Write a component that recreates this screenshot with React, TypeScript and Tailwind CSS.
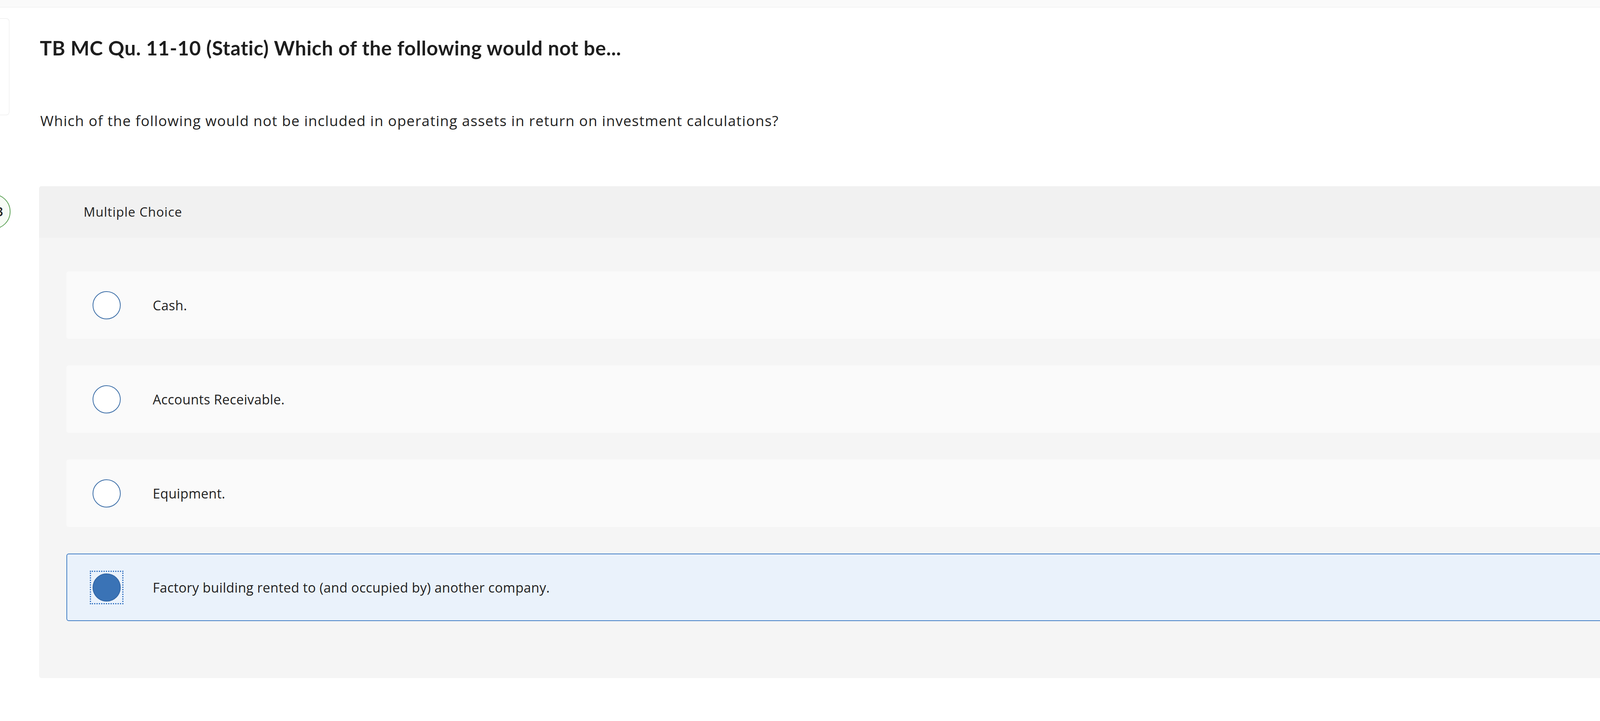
import React from "react";

const options = [
  { label: "Cash.", selected: false },
  { label: "Accounts Receivable.", selected: false },
  { label: "Equipment.", selected: false },
  { label: "Factory building rented to (and occupied by) another company.", selected: true },
];

function Radio({ selected }: { selected: boolean }) {
  if (selected) {
    return (
      <div className="-mx-[7px] w-[86px] h-[86px] shrink-0 border-[3px] border-dotted border-[#2f6fc0] flex items-center justify-center">
        <div className="w-[72px] h-[72px] rounded-full bg-[#3a73b6] border-2 border-[#3266a6]" />
      </div>
    );
  }
  return <div className="w-[72px] h-[72px] shrink-0 rounded-full bg-white border-2 border-[#3d6fa8]" />;
}

export default function App() {
  return (
    <div className="w-[6045px] h-[1847px] bg-white overflow-hidden font-['Open_Sans',sans-serif] text-[#222]">
      <div className="h-[19px] bg-[#fafafa] border-b border-[#ececec]" />
      <div className="flex">
        <div className="w-[100px] shrink-0 flex flex-col">
          <div className="mt-[28px] w-[24px] h-[248px] border border-l-0 border-[#e8e8e8] rounded-r-[8px] bg-white" />
          <div className="mt-[202px] -ml-[63px] w-[90px] h-[90px] rounded-full border-2 border-[#62a55c] bg-[#f7fbf5] flex items-center justify-end pr-[17px] text-[32px] font-semibold text-[#222]">
            3
          </div>
        </div>
        <div className="w-[5700px] shrink-0">
          <h1 className="mt-[74px] pl-[2px] font-['Lato',sans-serif] text-[51px] leading-[60px] tracking-[0.7px] font-bold text-[#1e1e1e]">
            TB MC Qu. 11-10 (Static) Which of the following would not be...
          </h1>
          <p className="mt-[132px] pl-[3px] text-[37px] leading-[48px] tracking-[1.3px] text-[#222]">
            Which of the following would not be included in operating assets in return on investment calculations?
          </p>
          <div className="mt-[144px] rounded-[6px] bg-[#f5f5f5] overflow-hidden">
            <div className="h-[132px] bg-[#f1f1f1] flex items-center pl-[114px] text-[33px] leading-[44px] tracking-[1px] text-[#222]">
              Multiple Choice
            </div>
            <div className="pt-[86px] pb-[146px] pl-[70px] pr-[75px] flex flex-col gap-[68px]">
              {options.map((o) => (
                <div
                  key={o.label}
                  className={
                    o.selected
                      ? "h-[173px] rounded-[6px] border-2 border-[#4580c6] bg-[#eaf2fb] flex items-center pl-[65px]"
                      : "h-[173px] rounded-[6px] border-2 border-[#fafafa] bg-[#fafafa] flex items-center pl-[65px]"
                  }
                >
                  <Radio selected={o.selected} />
                  <span className="ml-[82px] text-[34px] leading-[46px] tracking-[0.35px] text-[#222]">{o.label}</span>
                </div>
              ))}
            </div>
          </div>
        </div>
      </div>
    </div>
  );
}
